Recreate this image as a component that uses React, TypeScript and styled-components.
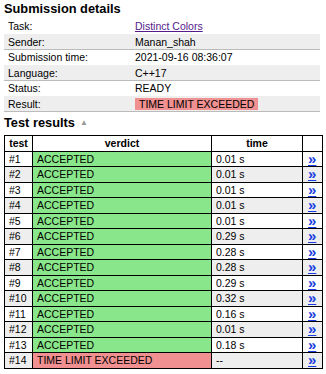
import React from "react";
import styled, { createGlobalStyle } from "styled-components";

const Global = createGlobalStyle`
  html, body { margin: 0; padding: 0; background: #fff; }
  body { font-family: "Liberation Sans", Arial, sans-serif; color: #000; }
`;

const Page = styled.div`
  padding: 2px 6px 0 4px;
  width: 316px;
`;

const Heading = styled.h2`
  margin: 0;
  font-size: 12.8px;
  line-height: 14px;
  font-weight: bold;
  display: flex;
  align-items: center;
  gap: 5px;
`;

const Toggle = styled.span`
  font-size: 8px;
  color: #999;
  font-weight: normal;
  padding-top: 1px;
`;

const Summary = styled.table`
  width: 316px;
  border-collapse: collapse;
  margin: 2px 0 0 0;
  font-size: 10.5px;
`;

const SRow = styled.tr<{ $alt: boolean }>`
  background: ${(p) => (p.$alt ? "#eeeeee" : "#ffffff")};
  border-top: 1px solid ${(p) => (p.$alt ? "#bbb" : "transparent")};
  border-bottom: 1px solid ${(p) => (p.$alt ? "#bbb" : "transparent")};
`;

const SLabel = styled.td`
  width: 127px;
  padding: 0 0 0 4px;
  height: 14.5px;
  line-height: 14.5px;
`;

const SValue = styled.td`
  padding: 0;
  height: 14.5px;
  line-height: 14.5px;
`;

const TaskLink = styled.a`
  color: #551a8b;
  text-decoration: underline;
`;

const Verdict = styled.span`
  background: #f09090;
  padding: 0 4px;
  display: inline-block;
  line-height: 12px;
`;

const ResultsHeading = styled(Heading)`
  margin-top: 3px;
`;

const Results = styled.table`
  width: 315px;
  border-collapse: collapse;
  margin-top: 5px;
  font-size: 10.5px;
  table-layout: fixed;
`;

const Th = styled.th<{ $w: number }>`
  width: ${(p) => p.$w}px;
  border: 1px solid #000;
  font-weight: bold;
  text-align: center;
  padding: 0;
  line-height: 14.5px;
  height: 14.5px;
  background: #fff;
`;

const Row = styled.tr<{ $alt: boolean }>`
  background: ${(p) => (p.$alt ? "#eeeeee" : "#ffffff")};
`;

const Td = styled.td`
  border: 1px solid #000;
  padding: 0 0 0 4px;
  line-height: 14.5px;
  height: 14.5px;
  white-space: nowrap;
  overflow: hidden;
`;

const VerdictTd = styled(Td)<{ $ok: boolean }>`
  background: ${(p) => (p.$ok ? "#8ae68a" : "#f09090")};
`;

const LinkTd = styled(Td)`
  padding: 0 0 0 5px;
  overflow: visible;
`;

const Arrow = styled.a`
  color: #1a3be0;
  font-weight: bold;
  font-size: 15px;
  line-height: 12px;
  text-decoration: underline;
  display: inline-block;
  vertical-align: top;
  padding-top: 1px;
`;

const details: [string, React.ReactNode][] = [
  ["Task:", <TaskLink href="#">Distinct Colors</TaskLink>],
  ["Sender:", "Manan_shah"],
  ["Submission time:", "2021-09-16 08:36:07"],
  ["Language:", "C++17"],
  ["Status:", "READY"],
  ["Result:", <Verdict>TIME LIMIT EXCEEDED</Verdict>],
];

const times = [
  "0.01 s", "0.01 s", "0.01 s", "0.01 s", "0.01 s", "0.29 s", "0.28 s",
  "0.28 s", "0.29 s", "0.32 s", "0.16 s", "0.01 s", "0.18 s", "--",
];

export default function App() {
  return (
    <>
      <Global />
      <Page>
        <Heading>Submission details</Heading>
        <Summary>
          <tbody>
            {details.map(([k, v], i) => (
              <SRow key={k} $alt={i % 2 === 1}>
                <SLabel>{k}</SLabel>
                <SValue>{v}</SValue>
              </SRow>
            ))}
          </tbody>
        </Summary>
        <ResultsHeading>
          Test results <Toggle>▲</Toggle>
        </ResultsHeading>
        <Results>
          <thead>
            <tr>
              <Th $w={27}>test</Th>
              <Th $w={178}>verdict</Th>
              <Th $w={90}>time</Th>
              <Th $w={19}></Th>
            </tr>
          </thead>
          <tbody>
            {times.map((t, i) => {
              const ok = i < 13;
              return (
                <Row key={i} $alt={i % 2 === 1}>
                  <Td>#{i + 1}</Td>
                  <VerdictTd $ok={ok}>{ok ? "ACCEPTED" : "TIME LIMIT EXCEEDED"}</VerdictTd>
                  <Td>{t}</Td>
                  <LinkTd>
                    <Arrow href="#">»</Arrow>
                  </LinkTd>
                </Row>
              );
            })}
          </tbody>
        </Results>
      </Page>
    </>
  );
}
